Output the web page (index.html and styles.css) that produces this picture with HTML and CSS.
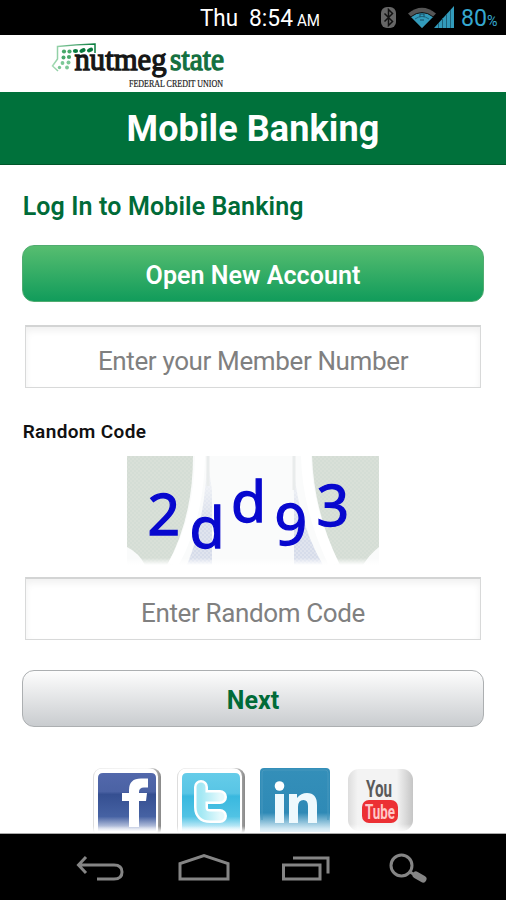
FILE: index.html
```html
<!DOCTYPE html>
<html lang="en">
<head>
<meta charset="utf-8">
<title>Mobile Banking</title>
<link rel="stylesheet" href="styles.css">
</head>
<body>
<div class="screen">
  <header class="status">
    <svg width="506" height="35" viewBox="0 0 506 35">
      <g fill="#fff" font-size="23">
        <text x="200" y="26" textLength="38" lengthAdjust="spacingAndGlyphs">Thu</text>
        <text x="249" y="26" textLength="44" lengthAdjust="spacingAndGlyphs">8:54</text>
        <text x="297" y="26" font-size="16" textLength="23" lengthAdjust="spacingAndGlyphs">AM</text>
      </g>
      <rect x="381" y="7" width="15" height="21" rx="6" fill="#666"/>
      <path d="M384.500 13.500l8 8-4 4v-16l4 4-8 8" fill="none" stroke="#111" stroke-width="1.500"/>
      <path d="M408 13.500q14-11.500 28 0L422 28z" fill="#555"/>
      <path d="M411 17q11-8.500 22 0L422 28z" fill="#329bbb"/>
      <path d="M410.500 17q11.500-9 23 0" fill="none" stroke="#111" stroke-width="1"/>
      <path d="M415 19q7-5 14 0" fill="none" stroke="#1d6179" stroke-width="1"/>
      <path d="M420 17v-3h4v3M420 20h4" fill="none" stroke="#164b60"/>
      <path d="M434 28L454 6v22z" fill="#329bbb"/>
      <path d="M438.500 23v5M442.500 18v10M446.500 14v14M450.500 10v18" stroke="#1d6179" stroke-width="1"/>
      <g fill="#36a8cf">
        <text x="461" y="26" font-size="23" textLength="26" lengthAdjust="spacingAndGlyphs">80</text>
        <text x="487" y="26" font-size="15" textLength="10.500" lengthAdjust="spacingAndGlyphs">%</text>
      </g>
    </svg>
  </header>
  <div class="brand">
    <svg width="200" height="57" viewBox="40 35 200 57">
      <defs>
        <linearGradient id="mark"><stop offset="0" stop-color="#a5dcb5"/><stop offset="1" stop-color="#087c3d"/></linearGradient>
      </defs>
      <path d="M95 53V44Q76 44.500 57.500 46.500V59L52.500 66L58 71" fill="none" stroke="url(#mark)" stroke-width="1.500"/>
      <g fill="#0a7a3e">
        <ellipse cx="90" cy="50" rx="3.200" ry="2" transform="rotate(-25 90 50)"/>
        <ellipse cx="82.500" cy="50.500" rx="3.200" ry="2" transform="rotate(-25 82.500 50.500)"/>
        <ellipse cx="75.500" cy="51" rx="2.600" ry="1.900"/>
      </g>
      <g fill="#48a86a"><circle cx="69.500" cy="51.500" r="2.100"/><circle cx="64" cy="51.500" r="2.100"/><circle cx="69" cy="57" r="2.100"/><circle cx="63.500" cy="57.500" r="2"/></g>
      <g fill="#7cc796"><circle cx="68.500" cy="62.500" r="2"/><circle cx="62.500" cy="63" r="1.900"/><circle cx="67" cy="67.500" r="1.900"/><circle cx="59.500" cy="67.500" r="1.700"/></g>
      <g class="serif">
        <text x="74.500" y="70.300" font-size="32.500" fill="#161616" stroke="#161616" stroke-width="1.300" textLength="92" lengthAdjust="spacingAndGlyphs">nutmeg</text>
        <text x="170" y="70.300" font-size="32.500" fill="#14703f" stroke="#14703f" stroke-width="1.300" textLength="54" lengthAdjust="spacingAndGlyphs">state</text>
        <text x="129" y="87" font-size="9.500" fill="#222" stroke="#222" stroke-width=".2" textLength="94" lengthAdjust="spacingAndGlyphs">FEDERAL CREDIT UNION</text>
      </g>
    </svg>
  </div>
  <h1 class="banner"><span>Mobile Banking</span></h1>
  <main class="content">
    <h2 class="heading">Log In to Mobile Banking</h2>
    <button class="button primary">Open New Account</button>
    <input class="field member" placeholder="Enter your Member Number">
    <label class="label">Random Code</label>
    <svg class="captcha" width="252" height="109" viewBox="127 456 252 109">
      <defs>
        <pattern id="grain" width="4" height="4" patternUnits="userSpaceOnUse"><rect width="4" height="4" fill="#d9e0d8"/><path d="M0 1h2M2 3h2" stroke="#d0dbd3" stroke-width="1"/></pattern>
        <pattern id="bluegrain" width="4" height="4" patternUnits="userSpaceOnUse"><rect width="4" height="4" fill="#e0e4ee"/><path d="M0 1h2M2 3h2" stroke="#cdd5e7" stroke-width="1"/></pattern>
        <linearGradient id="fade" x1="0" y1="0" x2="0" y2="1"><stop offset="0" stop-color="#fff" stop-opacity="0"/><stop offset="1" stop-color="#fff"/></linearGradient>
        <linearGradient id="haze" x1="0" y1="0" x2="0" y2="1"><stop offset="0" stop-color="#fafbfb"/><stop offset=".3" stop-color="#fafbfb" stop-opacity=".6"/><stop offset=".6" stop-color="#fafbfb" stop-opacity="0"/></linearGradient>
      </defs>
      <path fill="#fafbfb" d="M127 456h252v109H127z"/>
      <path d="M127 456h66q0 62-26 109h-22q-6-12-18-18zM312 456h67v91q-10 8-16 18h-23q-26-52-28-109z" fill="url(#grain)"/>
      <path d="M207 456q-1 62-20 109h25v-75zM293 456q3 63 30 109h-29v-65z" fill="url(#bluegrain)"/>
      <path d="M200 456h106v109H200z" fill="url(#haze)"/>
      <path d="M200 456q-1 63-27 109M306 456q1 53 28 109" stroke="#fff" stroke-width="10" fill="none"/>
      <path d="M208 456v30M294 456v34" stroke="#e9ecec" stroke-width="3"/>
      <path d="M127 558h252v7H127z" fill="url(#fade)"/>
      <g class="code" fill="#0808ce" stroke="#0808ce" stroke-width="1.300" font-size="57">
        <text x="147.500" y="534.500">2</text><text x="189.500" y="547.500">d</text><text x="231" y="521.500">d</text><text x="274.500" y="545">9</text><text x="316.500" y="525.500">3</text>
      </g>
    </svg>
    <input class="field random" placeholder="Enter Random Code">
    <button class="button next">Next</button>
    <svg class="social" width="326" height="68" viewBox="90 765 326 68">
      <defs>
        <linearGradient id="fb" x1="0" y1="0" x2="0" y2="1"><stop offset="0" stop-color="#5268ab"/><stop offset=".32" stop-color="#4b62a4"/><stop offset=".37" stop-color="#354f91"/><stop offset=".75" stop-color="#4662a3"/><stop offset="1" stop-color="#e7ebf5"/></linearGradient>
        <linearGradient id="tw" x1="0" y1="0" x2="0" y2="1"><stop offset="0" stop-color="#65cce9"/><stop offset=".35" stop-color="#58c5e5"/><stop offset=".4" stop-color="#39b8df"/><stop offset=".75" stop-color="#51c3e4"/><stop offset="1" stop-color="#eefaff"/></linearGradient>
        <linearGradient id="li" x1="0" y1="0" x2="0" y2="1"><stop offset="0" stop-color="#348fb9"/><stop offset=".7" stop-color="#2f8ab6"/><stop offset=".95" stop-color="#d2e9f4"/><stop offset="1" stop-color="#e5f3fa"/></linearGradient>
        <linearGradient id="yt"><stop offset="0" stop-color="#ddd"/><stop offset=".15" stop-color="#f3f3f3"/><stop offset=".75" stop-color="#f3f3f3"/><stop offset="1" stop-color="#c5c5c5"/></linearGradient>
        <linearGradient id="edge"><stop offset="0" stop-color="#ddd"/><stop offset=".8" stop-color="#eee"/><stop offset="1" stop-color="#888"/></linearGradient>
        <linearGradient id="bird"><stop offset="0" stop-color="#a3e8f4"/><stop offset="1" stop-color="#e4f9fc"/></linearGradient>
        <filter id="soft"><feGaussianBlur stdDeviation=".7"/></filter>
      </defs>
      <rect x="93" y="768" width="68" height="70" rx="9" fill="url(#edge)" filter="url(#soft)"/>
      <rect x="94" y="768.500" width="64" height="69" rx="8" fill="#fff"/>
      <path d="M103 773h48q5 0 5 5v53H98v-53q0-5 5-5z" fill="url(#fb)"/>
      <path d="M129 827V801h-7v-8h7v-3q0-11.500 12-11.500h7v9h-4q-5 0-5 4.500v1h8l-1 8h-7v26z" fill="#fff"/>
      <rect x="177" y="768" width="68" height="70" rx="9" fill="url(#edge)" filter="url(#soft)"/>
      <rect x="178" y="768.500" width="64" height="69" rx="8" fill="#fff"/>
      <path d="M187 773h48q5 0 5 5v53h-58v-53q0-5 5-5z" fill="url(#tw)"/>
      <path d="M201 787v20q0 9 9 9h10M201 797h19" fill="none" stroke="#fff" stroke-width="14" stroke-linecap="round" stroke-linejoin="round"/>
      <path d="M201 787v20q0 9 9 9h10M201 797h19" fill="none" stroke="url(#bird)" stroke-width="9" stroke-linecap="round" stroke-linejoin="round"/>
      <path d="M264 768h62q4 0 4 4v60h-70v-60q0-4 4-4z" fill="url(#li)"/>
      <path d="M262 820v-47q0-3 3-3h60q3 0 3 3v47" fill="none" stroke="#4797bd" stroke-width="1"/>
      <circle cx="279.500" cy="786" r="4.800" fill="#fff"/>
      <path d="M275 794h9v29h-9zM289 794h8v4q4-5 10-5 10 0 10 12v18h-9v-17q0-6-4.500-6-5.500 0-5.500 7v16h-9z" fill="#eef9fd"/>
      <rect x="348" y="769" width="65" height="62" rx="11" fill="url(#yt)" filter="url(#soft)"/>
      <text x="366" y="796.500" font-size="24" font-weight="bold" fill="#5a5a5a" textLength="26" lengthAdjust="spacingAndGlyphs">You</text>
      <rect x="362" y="800" width="36" height="23" rx="7" fill="#ec3034"/>
      <text x="365" y="819" font-size="20" font-weight="bold" fill="#ffc8c8" textLength="30" lengthAdjust="spacingAndGlyphs">Tube</text>
      <path d="M345 824h71v9h-71z" fill="url(#fade)"/>
      <path d="M90 826h158v7H90z" fill="url(#fade)"/>
    </svg>
  </main>
  <nav class="nav">
    <svg width="506" height="66" viewBox="0 834 506 66" fill="none" stroke="#858585" stroke-width="3">
      <path d="M86 857l-7.500 8 7.500 8M78 865h36q8 0 8 7t-8 7H97"/>
      <path d="M180 879v-15.500l24-8 24 8V879z"/>
      <path d="M283.500 865h36.500v14h-36.500zM293 858h35v15.500"/>
      <circle cx="401.500" cy="865.500" r="10.500"/>
      <path d="M410 872l5 3"/><path d="M416 875l7 4" stroke-width="7" stroke-linecap="round"/>
    </svg>
  </nav>
</div>
</body>
</html>
```
FILE: styles.css
```css
* { box-sizing: border-box; }
body { margin: 0; font-family: Roboto, sans-serif; background: #fff; }
svg { display: block; }
.screen { width: 506px; height: 900px; display: flex; flex-direction: column; overflow: hidden; }
.status { height: 35px; background: #000; }
.brand { height: 57px; padding-left: 40px; }
.serif { font-family: "Liberation Serif", serif; }
.banner { height: 73px; margin: 0; display: flex; justify-content: center; background: #00713b; border-bottom: 1px solid #00562a; color: #fff; font-size: 36px; line-height: 75px; letter-spacing: .1px; }
.content { height: 668px; padding: 0 22px; display: flex; flex-direction: column; flex: none; }
.heading { margin: 26px 0 23px .7px; height: 31px; color: #006b38; font-size: 25px; font-weight: 600; line-height: 32px; letter-spacing: .13px; white-space: nowrap; }
.button { flex: none; height: 57px; width: 462px; border-radius: 12px; font: 600 25px/57px Roboto, sans-serif; padding: 0; letter-spacing: .05px; }
.primary { border: 1px solid #50ac70; background: linear-gradient(#57bd70, #119c5b); color: #fff; line-height: 59px; }
.field { flex: none; width: 456px; height: 63px; margin-left: 3px; padding: 8px 0 0; border: 1px solid #d8d9d9; border-top: 2px solid #d3d4d4; border-radius: 0; background: #fff; box-shadow: inset 0 4px 7px #f1f1f1; color: #777; font: 26px Roboto, sans-serif; letter-spacing: -.37px; text-align: center; outline: 0; }
.field::placeholder { color: #808080; opacity: 1; }
.member { margin-top: 23px; }
.label { margin: 32px 0 0 .7px; height: 24px; color: #111; font-weight: 600; font-size: 19px; line-height: 24px; letter-spacing: .36px; }
.captcha { margin: 12px 0 0 105px; flex: none; }
.code { font-family: "Noto Sans", sans-serif; }
.random { margin-top: 12px; }
.next { margin-top: 30px; border: 1px solid #acafb1; background: linear-gradient(#fdfdfd, #c9cccf); color: #006b38; font-weight: 700; line-height: 59px; }
.social { margin: 38px 0 0 68px; flex: none; }
.nav { height: 67px; background: #000; border-top: 1px solid #aaa; flex: none; }
```
